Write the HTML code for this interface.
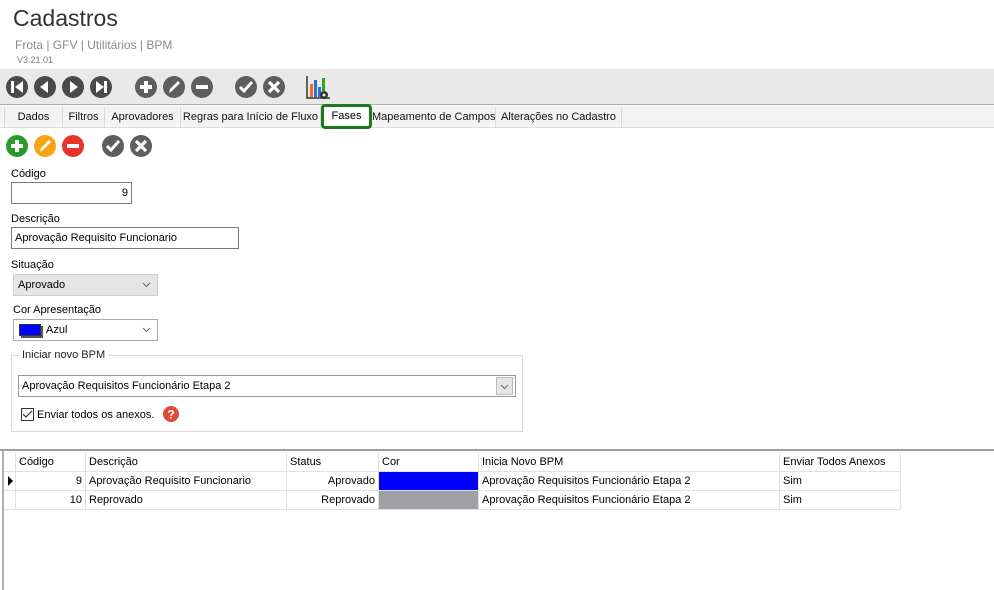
<!DOCTYPE html>
<html><head><meta charset="utf-8"><style>
*{margin:0;padding:0;box-sizing:border-box}
body{width:994px;height:590px;background:#fff;position:relative;overflow:hidden;font-family:"Liberation Sans",Arial,sans-serif;font-size:11px;color:#000}
.a{position:absolute;white-space:nowrap}
.tab{position:absolute;top:107px;height:21px;border-right:1px solid #d8d8d8;font-size:11px;line-height:21px;text-align:center;color:#111;white-space:nowrap;overflow:hidden}
.lbl{position:absolute;font-size:11px}
.inp{position:absolute;border:1px solid #7a7a7a;background:#fff;height:22px;line-height:20px;padding:0 3px;white-space:nowrap}
.g{position:absolute;height:19px;line-height:19px;border-right:1px solid #e2e2e2;border-bottom:1px solid #e2e2e2;padding:0 3px;font-size:11px;white-space:nowrap;overflow:hidden}
.chev{position:absolute;right:6px;top:7px}
</style></head><body>
<div class="a" style="left:13px;top:5px;font-size:23px;color:#333">Cadastros</div>
<div class="a" style="left:15px;top:38px;font-size:12px;color:#8a8a8a">Frota | GFV | Utilitários | BPM</div>
<div class="a" style="left:17px;top:55px;font-size:9px;color:#777">V3.21.01</div>
<div class="a" style="left:0;top:69px;width:994px;height:36px;background:#e9e9e9;border-bottom:1px solid #a8a8a8"></div>

<svg class="a" style="left:0;top:69px" width="340" height="36">
<g fill="#4a4a4a">
<circle cx="17" cy="18" r="11"/><circle cx="45" cy="18" r="11"/><circle cx="73" cy="18" r="11"/><circle cx="101" cy="18" r="11"/>
</g>
<g fill="#5e5e5e"><circle cx="146" cy="18" r="11"/><circle cx="174" cy="18" r="11"/><circle cx="202" cy="18" r="11"/><circle cx="246" cy="18" r="11"/><circle cx="274" cy="18" r="11"/></g>
<g fill="#fff">
<rect x="11" y="12" width="3" height="12"/><path d="M23 12 L15 18 L23 24Z"/>
<path d="M48 12 L40 18 L48 24Z"/>
<path d="M70 12 L78 18 L70 24Z"/>
<path d="M96 12 L104 18 L96 24Z"/><rect x="104" y="12" width="3" height="12"/>
<rect x="140" y="16" width="12" height="4"/><rect x="144" y="12" width="4" height="12"/>
<rect x="196" y="16" width="12" height="4"/>
</g>
<path d="M169 24 L170 20 L178 12 L180 14 L172 22Z" fill="#fff"/>
<path d="M240 18 L244 22 L252 13" stroke="#fff" stroke-width="3" fill="none"/>
<path d="M269 13 L279 23 M279 13 L269 23" stroke="#fff" stroke-width="3.2"/>
<path d="M307 7 V29 H330" stroke="#333" stroke-width="1.5" fill="none"/>
<rect x="310" y="15" width="3" height="13" fill="#f26b21"/><rect x="314" y="11" width="3" height="17" fill="#2a6fd6"/><rect x="318" y="18" width="3" height="10" fill="#2a6fd6"/><rect x="322" y="9" width="3" height="13" fill="#2ba52b"/>
<circle cx="324" cy="26" r="4" fill="#333"/><circle cx="324" cy="26" r="1.5" fill="#e9e9e9"/>
</svg>

<div class="a" style="left:0;top:106px;width:994px;height:22px;background:#f3f3f3;border-bottom:1px solid #e0e0e0"></div>
<div class="tab" style="left:4px;width:59px;border-left:1px solid #d8d8d8">Dados</div>
<div class="tab" style="left:63px;width:42px">Filtros</div>
<div class="tab" style="left:105px;width:76px">Aprovadores</div>
<div class="tab" style="left:181px;width:140px">Regras para Início de Fluxo</div>
<div class="a" style="left:321px;top:104px;width:51px;height:25px;border:3px solid #187a18;border-radius:4px;background:#fff;text-align:center;line-height:18px">Fases</div>
<div class="tab" style="left:372px;width:124px">Mapeamento de Campos</div>
<div class="tab" style="left:496px;width:126px">Alterações no Cadastro</div>

<svg class="a" style="left:0;top:134px" width="160" height="24">
<circle cx="17" cy="12" r="11" fill="#2a9a2a"/><circle cx="45" cy="12" r="11" fill="#f5a416"/><circle cx="73" cy="12" r="11" fill="#e8322a"/>
<circle cx="113" cy="12" r="11" fill="#5e5e5e"/><circle cx="141" cy="12" r="11" fill="#5e5e5e"/>
<rect x="11" y="10" width="12" height="4" fill="#fff"/><rect x="15" y="6" width="4" height="12" fill="#fff"/>
<path d="M40 18 L41 14 L49 6 L51 8 L43 16Z" fill="#fff"/>
<rect x="67" y="10" width="12" height="4" fill="#fff"/>
<path d="M107 12 L111 16 L119 7" stroke="#fff" stroke-width="3" fill="none"/>
<path d="M136 7 L146 17 M146 7 L136 17" stroke="#fff" stroke-width="3.2"/>
</svg>

<div class="lbl" style="left:11px;top:168px">Código</div>
<div class="inp" style="left:11px;top:182px;width:121px;text-align:right">9</div>
<div class="lbl" style="left:11px;top:213px">Descrição</div>
<div class="inp" style="left:11px;top:227px;width:228px">Aprovação Requisito Funcionario</div>
<div class="lbl" style="left:11px;top:259px">Situação</div>
<div class="a" style="left:13px;top:274px;width:145px;height:22px;background:#e5e5e5;border:1px solid #cfcfcf;line-height:20px;padding-left:4px">Aprovado<svg class="chev" width="9" height="6"><path d="M1 1 L4.5 4.5 L8 1" stroke="#666" fill="none"/></svg></div>
<div class="lbl" style="left:13px;top:304px">Cor Apresentação</div>
<div class="a" style="left:13px;top:319px;width:145px;height:22px;background:#fff;border:1px solid #aaa;line-height:20px"><span style="position:absolute;left:5px;top:4px;width:22px;height:12px;background:#00f;border:1px solid #333;box-shadow:2px 2px 0 #555"></span><span style="position:absolute;left:32px">Azul</span><svg class="chev" width="9" height="6"><path d="M1 1 L4.5 4.5 L8 1" stroke="#666" fill="none"/></svg></div>

<div class="a" style="left:11px;top:355px;width:512px;height:77px;border:1px solid #d8d8d8"></div>
<div class="a" style="left:19px;top:349px;background:#fff;padding:0 3px;color:#222">Iniciar novo BPM</div>
<div class="a" style="left:18px;top:375px;width:498px;height:22px;border:1px solid #9a9a9a;line-height:20px;padding-left:3px">Aprovação Requisitos Funcionário Etapa 2<span style="position:absolute;right:2px;top:1px;width:17px;height:18px;background:#e5e5e5;border:1px solid #bbb"><svg style="position:absolute;left:3px;top:6px" width="9" height="6"><path d="M1 1 L4.5 4.5 L8 1" stroke="#666" fill="none"/></svg></span></div>
<div class="a" style="left:21px;top:408px;width:13px;height:13px;border:1px solid #333"></div>
<svg class="a" style="left:21px;top:408px" width="13" height="13"><path d="M2 6 L5 9 L11 3" stroke="#333" stroke-width="1.2" fill="none"/></svg>
<div class="a" style="left:37px;top:409px">Enviar todos os anexos.</div>
<svg class="a" style="left:163px;top:406px" width="16" height="16"><circle cx="8" cy="8" r="8" fill="#e04a3a"/><text x="8" y="12.5" text-anchor="middle" font-family="Liberation Sans" font-weight="bold" font-size="12" fill="#fff">?</text></svg>

<div class="a" style="left:0;top:449px;width:994px;height:2px;background:#a0a0a0"></div>
<div class="a" style="left:2px;top:451px;width:2px;height:139px;background:#b0b0b0"></div>

<div class="g" style="left:4px;top:453px;width:12px"></div>
<div class="g" style="left:16px;top:453px;width:70px">Código</div>
<div class="g" style="left:86px;top:453px;width:201px">Descrição</div>
<div class="g" style="left:287px;top:453px;width:92px">Status</div>
<div class="g" style="left:379px;top:453px;width:100px">Cor</div>
<div class="g" style="left:479px;top:453px;width:301px">Inicia Novo BPM</div>
<div class="g" style="left:780px;top:453px;width:121px">Enviar Todos Anexos</div>

<div class="g" style="left:4px;top:472px;width:12px;padding:0"><svg width="12" height="18"><path d="M4 4 L9 9 L4 14Z" fill="#000"/></svg></div>
<div class="g" style="left:16px;top:472px;width:70px;text-align:right">9</div>
<div class="g" style="left:86px;top:472px;width:201px">Aprovação Requisito Funcionario</div>
<div class="g" style="left:287px;top:472px;width:92px;text-align:right">Aprovado</div>
<div class="g" style="left:379px;top:472px;width:100px;background:#0000ff"></div>
<div class="g" style="left:479px;top:472px;width:301px">Aprovação Requisitos Funcionário Etapa 2</div>
<div class="g" style="left:780px;top:472px;width:121px">Sim</div>

<div class="g" style="left:4px;top:491px;width:12px"></div>
<div class="g" style="left:16px;top:491px;width:70px;text-align:right">10</div>
<div class="g" style="left:86px;top:491px;width:201px">Reprovado</div>
<div class="g" style="left:287px;top:491px;width:92px;text-align:right">Reprovado</div>
<div class="g" style="left:379px;top:491px;width:100px;background:#a0a0a4"></div>
<div class="g" style="left:479px;top:491px;width:301px">Aprovação Requisitos Funcionário Etapa 2</div>
<div class="g" style="left:780px;top:491px;width:121px">Sim</div>
</body></html>
